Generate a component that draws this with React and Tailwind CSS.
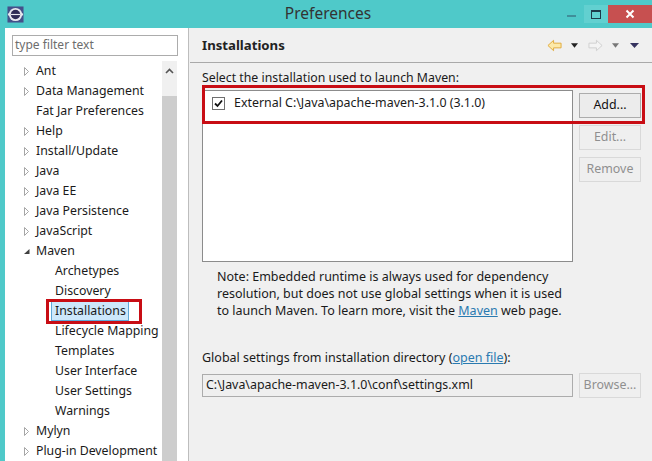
const FONT = { fontFamily: '"Noto Sans", "Open Sans", sans-serif' };

const tree = [
  { t: "Ant", a: "r" }, { t: "Data Management", a: "r" }, { t: "Fat Jar Preferences" }, { t: "Help", a: "r" },
  { t: "Install/Update", a: "r" }, { t: "Java", a: "r" }, { t: "Java EE", a: "r" }, { t: "Java Persistence", a: "r" },
  { t: "JavaScript", a: "r" }, { t: "Maven", a: "d" }, { t: "Archetypes", c: 1 }, { t: "Discovery", c: 1 },
  { t: "Installations", c: 1, s: 1 }, { t: "Lifecycle Mapping", c: 1 }, { t: "Templates", c: 1 }, { t: "User Interface", c: 1 },
  { t: "User Settings", c: 1 }, { t: "Warnings", c: 1 }, { t: "Mylyn", a: "r" }, { t: "Plug-in Development", a: "r" },
];

function Arrow({ a }) {
  if (a === "r") return <svg width="7" height="11" viewBox="0 0 7 11" className="shrink-0"><path d="M1.5 1.5 L5.5 5.5 L1.5 9.5 Z" fill="#fff" stroke="#a6a6a6" /></svg>;
  if (a === "d") return <svg width="7" height="11" viewBox="0 0 7 11" className="shrink-0"><path d="M6.5 3 L6.5 8 L1 8 Z" fill="#404040" /></svg>;
  return <span className="w-[7px] shrink-0" />;
}

function Row({ r }) {
  return (
    <div className={`h-5 flex items-center text-[12.3px] text-[#1a1a1a] whitespace-nowrap ${r.c ? "pl-[50px]" : "pl-[18px]"}`}>
      {!r.c && <Arrow a={r.a} />}
      {!r.c && <span className="w-[6px] shrink-0" />}
      {r.s ? <span className="bg-[#cde8fb] border border-[#5fa8d8] h-[20px] leading-[18px] pl-[3px] pr-[2px] -ml-[4px]">{r.t}</span> : <span>{r.t}</span>}
    </div>
  );
}

function Btn({ children, on }) {
  return (
    <div className={`w-[62px] h-[25px] flex items-center justify-center text-[12.4px] border ${on ? "border-[#acacac] bg-[#ececec] text-[#111]" : "border-[#d9d9d9] bg-[#efefef] text-[#8f8f8f]"}`}>{children}</div>
  );
}

export default function App() {
  return (
    <div className="relative w-[652px] h-[461px] overflow-hidden flex flex-col bg-[#4fc9c9]" style={FONT}>
      <div className="h-[28px] shrink-0 flex items-center relative">
        <div className="w-[30px] flex justify-center">
          <svg width="17" height="17" viewBox="0 0 18 18">
            <rect x="0.5" y="0.5" width="17" height="17" fill="#44508a" />
            <circle cx="9" cy="9" r="7" fill="#e8e8ee" />
            <circle cx="2.5" cy="9" r="1.5" fill="#e8e8ee" /><circle cx="15.5" cy="9" r="1.5" fill="#e8e8ee" />
            <circle cx="9" cy="9" r="5" fill="#2f2b55" />
            <rect x="4" y="8.4" width="10" height="1.2" fill="#e8e8ee" />
          </svg>
        </div>
        <div className="flex-1 text-center text-[15.5px] text-[#333] pl-[68px]">Preferences</div>
        <div className="flex items-center h-full self-start">
          <div className="w-[26px] h-[18px] flex items-center justify-center">
            <span className="w-[9px] h-[2px] bg-[#3f8f9a] mt-[3px]" />
          </div>
          <div className="w-[24px] h-[18px] flex items-center justify-center bg-[#62d0d0]">
            <span className="w-[10px] h-[9px] border border-[#1d3a4a] border-t-2" />
          </div>
          <div className="w-[44px] h-[18px] flex items-center justify-center bg-[#c75050]">
            <svg width="10" height="10" viewBox="0 0 10 10"><path d="M1.5 1.5 L8.5 8.5 M8.5 1.5 L1.5 8.5" stroke="#fff" strokeWidth="2" /></svg>
          </div>
        </div>
      </div>

      <div className="flex-1 flex ml-[5px] min-h-0">
        <div className="w-[183px] shrink-0 bg-white flex flex-col pt-[7px] pl-[7px] pr-[10px]">
          <div className="h-[21px] border border-[#acacac] text-[12px] text-[#6d6d6d] pl-[2px] leading-[18px] shrink-0">type filter text</div>
          <div className="flex mt-[5px] flex-1 min-h-0 -ml-[7px] -mr-[10px]">
            <div className="flex-1 overflow-hidden">
              {tree.map((r) => <Row key={r.t} r={r} />)}
            </div>
            <div className="w-[15px] mr-[11px] bg-[#f0f0f0] flex flex-col shrink-0">
              <div className="h-[35px] flex items-center justify-center shrink-0 pb-[15px]">
                <svg width="9" height="6" viewBox="0 0 9 6"><path d="M1 5 L4.5 1.5 L8 5" fill="none" stroke="#555" strokeWidth="1.6" /></svg>
              </div>
              <div className="flex-1 bg-[#cdcdcd]" />
            </div>
          </div>
        </div>
        <div className="w-[2px] shrink-0 bg-[#f0f0f0] border-l border-[#bdbdbd]" />

        <div className="flex-1 bg-[#f0f0f0] flex flex-col min-w-0">
          <div className="h-[35px] shrink-0 border-b border-[#a9a9a9] flex items-center pl-[12px] pr-[13px]">
            <span className="text-[13.2px] font-bold text-[#222] flex-1 mt-[1px]">Installations</span>
            <div className="flex items-center">
              <svg width="15" height="13" viewBox="0 0 16 13"><path d="M7 1 L1 6.5 L7 12 L7 9 L15 9 L15 4 L7 4 Z" fill="#fde9a8" stroke="#e0a93a" /></svg>
              <svg width="7" height="5" viewBox="0 0 8 5" className="ml-[9px]"><path d="M0 0 H8 L4 5 Z" fill="#222" /></svg>
              <svg width="15" height="13" viewBox="0 0 16 13" className="ml-[10px]"><path d="M9 1 L15 6.5 L9 12 L9 9 L1 9 L1 4 L9 4 Z" fill="#f4f4f4" stroke="#cfcfcf" /></svg>
              <svg width="7" height="5" viewBox="0 0 8 5" className="ml-[9px]"><path d="M0 0 H8 L4 5 Z" fill="#777" /></svg>
              <svg width="9" height="5" viewBox="0 0 9 5" className="ml-[11px]"><path d="M0 0 H9 L4.5 5 Z" fill="#35335f" /></svg>
            </div>
          </div>

          <div className="pl-[12px] pr-[9px] flex flex-col">
            <div className="text-[12.3px] text-[#1a1a1a] h-[20px] mt-[5px] leading-[20px]">Select the installation used to launch Maven:</div>
            <div className="flex gap-[6px] mt-[2px]">
              <div className="w-[371px] h-[172px] bg-white border border-[#8c8c8c] shrink-0">
                <div className="h-[25px] flex items-center pl-[9px]">
                  <span className="w-[13px] h-[13px] border border-[#6f6f6f] bg-white flex items-center justify-center">
                    <svg width="9" height="9" viewBox="0 0 9 9"><path d="M1 4.5 L3.5 7 L8 1.5" fill="none" stroke="#111" strokeWidth="1.8" /></svg>
                  </span>
                  <span className="ml-[9px] text-[12.4px] text-[#1a1a1a] whitespace-nowrap">External C:\Java\apache-maven-3.1.0 (3.1.0)</span>
                </div>
              </div>
              <div className="flex flex-col gap-[7px] pt-[3px]">
                <Btn on>Add...</Btn>
                <Btn>Edit...</Btn>
                <Btn>Remove</Btn>
              </div>
            </div>
            <div className="ml-[15px] mt-[6px] text-[12.5px] leading-[17px] text-[#1a1a1a] w-[360px]">
              <div className="whitespace-nowrap">Note: Embedded runtime is always used for dependency</div>
              <div className="whitespace-nowrap">resolution, but does not use global settings when it is used</div>
              <div className="whitespace-nowrap">to launch Maven. To learn more, visit the <span className="text-[#2a7ab0] underline">Maven</span> web page.</div>
            </div>
            <div className="mt-[29px] text-[12.5px] h-[20px] leading-[20px] text-[#1a1a1a] whitespace-nowrap">Global settings from installation directory (<span className="text-[#2a7ab0] underline">open file</span>):</div>
            <div className="flex gap-[6px] mt-[5px] items-center">
              <div className="w-[371px] h-[23px] border border-[#acacac] bg-[#efefef] pl-[3px] text-[12.4px] leading-[20px] text-[#1a1a1a] shrink-0">C:\Java\apache-maven-3.1.0\conf\settings.xml</div>
              <Btn>Browse...</Btn>
            </div>
          </div>
        </div>
      </div>

      <div className="absolute left-[202px] top-[85px] w-[443px] h-[39px] border-[3px] border-[#c80d14]" />
      <div className="absolute left-[46px] top-[299px] w-[96px] h-[25px] border-[3px] border-[#c80d14]" />
    </div>
  );
}
